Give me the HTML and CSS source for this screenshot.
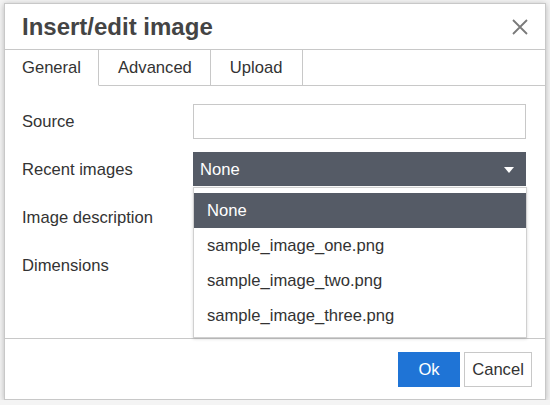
FILE: index.html
```html
<!DOCTYPE html>
<html>
<head>
<meta charset="utf-8">
<link rel="stylesheet" href="styles.css">
</head>
<body>
<div class="dialog">
  <div class="head">
    <div class="title">Insert/edit image</div>
    <div class="close"><svg width="16" height="16" viewBox="0 0 16 16"><path d="M1 1L15 15M15 1L1 15" stroke="#7a7a7a" stroke-width="1.8" fill="none"/></svg></div>
  </div>
  <div class="tabs">
    <div class="tab active">General</div>
    <div class="tab">Advanced</div>
    <div class="tab">Upload</div>
    <div class="tab-fill"></div>
  </div>
  <div class="body">
    <div class="row"><div class="label">Source</div><div class="input"></div></div>
    <div class="row"><div class="label">Recent images</div>
      <div class="field">
        <div class="select"><span>None</span><svg class="caret" width="10" height="6" viewBox="0 0 10 6"><path d="M0 0H10L5 6Z" fill="#fff"/></svg></div>
        <div class="menu">
          <div class="item sel">None</div>
          <div class="item">sample_image_one.png</div>
          <div class="item">sample_image_two.png</div>
          <div class="item">sample_image_three.png</div>
        </div>
      </div>
    </div>
    <div class="row"><div class="label">Image description</div></div>
    <div class="row"><div class="label">Dimensions</div></div>
  </div>
  <div class="foot">
    <div class="btn ok">Ok</div>
    <div class="btn cancel">Cancel</div>
  </div>
</div>
</body>
</html>
```
FILE: styles.css
```css
html, body { margin: 0; padding: 0; background: #f4f4f4; }
body { font-family: "Liberation Sans", Arial, sans-serif; color: #333; font-size: 16.6px; }
.dialog {
  margin: 3px 0 0 4px;
  width: 540px;
  height: 395px;
  background: #fff;
  border: 1px solid #c8c8c8;
  box-shadow: 0 1px 6px rgba(0,0,0,0.25);
  display: flex;
  flex-direction: column;
}
.head {
  height: 45px;
  border-bottom: 1px solid #c8c8c8;
  display: flex;
  align-items: center;
  justify-content: space-between;
  padding: 0 17px 0 17px;
}
.title { font-size: 24px; font-weight: bold; color: #444; padding-top: 1px; }
.close { width: 16px; height: 16px; margin-top: 0; }
.close svg { display: block; }
.tabs { display: flex; height: 36px; }
.tab {
  padding: 0 17px 0 17px;
  display: flex;
  align-items: center;
  border-right: 1px solid #c8c8c8;
  border-bottom: 1px solid #c8c8c8;
  color: #333;
  padding-top: 1px;
}
.tab.active { border-bottom-color: #fff; }
.tab:nth-child(2) { padding-left: 19px; padding-right: 18px; }
.tab:nth-child(3) { padding-left: 19px; padding-right: 20px; }
.tab-fill { flex: 1; border-bottom: 1px solid #c8c8c8; }
.body {
  flex: 1;
  padding: 18px 19px 0 17px;
  display: flex;
  flex-direction: column;
  gap: 13px;
}
.row { display: flex; align-items: center; height: 35px; }
.label { width: 171px; color: #333; padding-top: 1px; }
.input {
  flex: 1;
  height: 33px;
  border: 1px solid #c8c8c8;
}
.field { flex: 1; position: relative; height: 35px; }
.select {
  height: 34px;
  background: #555b66;
  color: #fff;
  display: flex;
  align-items: center;
  justify-content: space-between;
  padding: 1px 12px 0 7px;
  box-sizing: border-box;
}
.caret { display: block; }
.menu {
  position: absolute;
  left: 0;
  right: -1px;
  top: 35px;
  background: #fff;
  border: 1px solid #d0d0d0;
  box-shadow: 0 1px 3px rgba(0,0,0,0.15);
  padding: 5px 0 4px 0;
  z-index: 2;
}
.item { height: 35px; line-height: 36px; padding-left: 13px; color: #333; }
.item.sel { background: #555b66; color: #fff; }
.foot {
  height: 60px;
  border-top: 1px solid #c8c8c8;
  display: flex;
  justify-content: flex-end;
  align-items: center;
  gap: 4px;
  padding: 0 13px 0 0;
}
.btn {
  height: 33px;
  display: flex;
  align-items: center;
  justify-content: center;
  margin-top: 1px;
}
.ok { width: 60px; background: #1f74d6; border: 1px solid #1f74d6; color: #fff; }
.cancel { width: 66px; background: #fff; border: 1px solid #c8c8c8; color: #333; }
```
